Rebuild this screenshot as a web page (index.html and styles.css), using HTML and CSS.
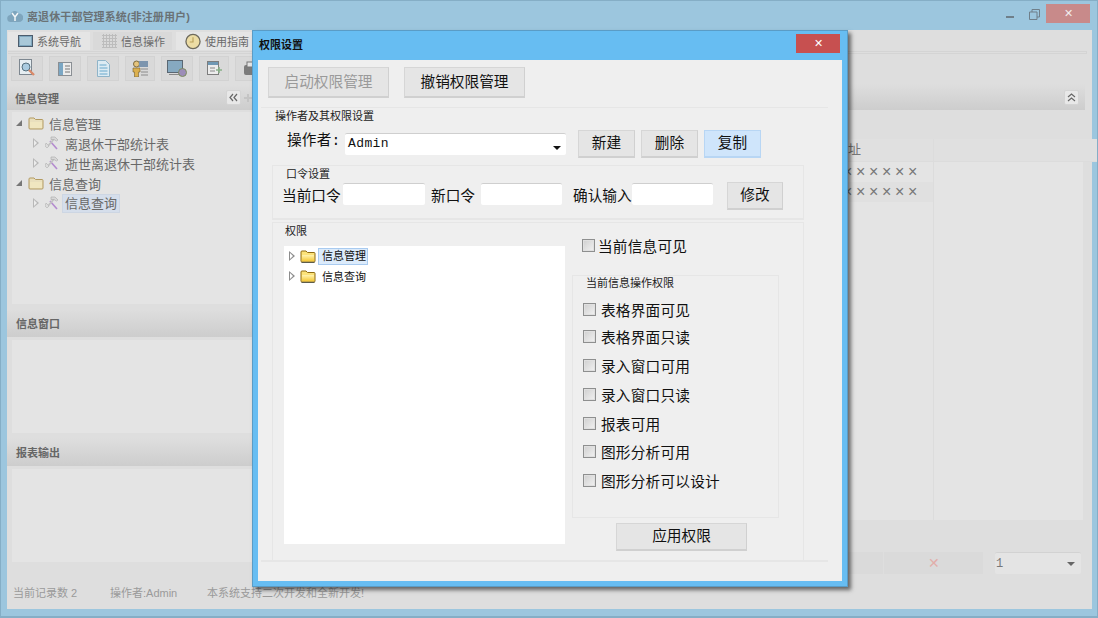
FILE: index.html
```html
<!DOCTYPE html>
<html lang="zh">
<head>
<meta charset="utf-8">
<title>离退休干部管理系统</title>
<link rel="stylesheet" href="styles.css">
</head>
<body>
<svg class="defs" width="0" height="0" aria-hidden="true">
  <defs>
    <linearGradient id="fy" x1="0" y1="0" x2="0" y2="1"><stop offset="0" stop-color="#fff3b0"/><stop offset="1" stop-color="#f5c93a"/></linearGradient>
    <symbol id="folder-y" viewBox="0 0 16 13"><path d="M1 3V2q0-1 1-1h4l1.500 1.500H14q1 0 1 1V11q0 1-1 1H2q-1 0-1-1Z" fill="#fbe27a" stroke="#8f6b12"/><path d="M2 5h12v6H2Z" fill="url(#fy)"/><path d="M1.500 12.500h13" stroke="#5c5c4c"/></symbol>
    <symbol id="folder-d" viewBox="0 0 16 13"><path d="M1 3V2q0-1 1-1h4l1.500 1.500H14q1 0 1 1V11q0 1-1 1H2q-1 0-1-1Z" fill="#e9dfbd" stroke="#b39a60"/><path d="M2 5h12v6H2Z" fill="#f0e6c0"/></symbol>
    <symbol id="tool" viewBox="0 0 14 14"><path d="M5 5 12 13" stroke="#b48ccf" stroke-width="1.600"/><path d="M9 3 3 10" stroke="#c2c2c2" stroke-width="1.800"/><path d="M6 1h4l3 3-1.500 1L9 3.500H6Z" fill="#d8d8d8" stroke="#a8a8a8" stroke-width=".6"/><path d="M1 7l3 3-2 2-2-2Z" fill="#dcdcdc" stroke="#b0b0b0" stroke-width=".6"/></symbol>
  </defs>
</svg>
<div class="desktop">
  <header class="titlebar">
    <svg class="logo" width="16" height="14" viewBox="0 0 16 14"><path d="M4 13a3.500 3.500 0 0 1-.5-7A4.500 4.500 0 0 1 12 4.500 4 4 0 0 1 12 13Z" fill="#7ea5bd"/><path d="M5 4l3 4 3-4M8 8v4" stroke="#f2f6f8" stroke-width="1.500" fill="none"/></svg>
    <span class="app-title">离退休干部管理系统(非注册用户)</span>
    <div class="win-ctrls">
      <span class="win-min"></span>
      <svg class="win-restore" width="11" height="11" viewBox="0 0 11 11"><path d="M.5 3h7.500v7.500H.5Z M3 3V.5h7.500V8H8" fill="none" stroke="#6f7f8a"/></svg>
      <button class="win-close">✕</button>
    </div>
  </header>

  <div class="client">
    <nav class="tabs">
      <div class="tab">
        <svg width="15" height="12" viewBox="0 0 15 12"><rect x=".5" y=".5" width="14" height="11" fill="#7fa6bd" stroke="#4c5c6c"/><rect x="2" y="2" width="11" height="8" fill="#a9c8d8"/></svg>
        <span>系统导航</span>
      </div>
      <div class="tab tab-on">
        <svg width="15" height="14" viewBox="0 0 15 14"><path d="M0 1.500h15M0 4.500h15M0 7.500h15M0 10.500h15M0 13.500h15M1.500 0v14M4.500 0v14M7.500 0v14M10.500 0v14M13.500 0v14" stroke="#bcbcbc"/></svg>
        <span>信息操作</span>
      </div>
      <div class="tab">
        <svg width="16" height="17" viewBox="0 0 17 17"><circle cx="8.500" cy="8.500" r="7.500" fill="#ecdca4" stroke="#6e6a5c" stroke-width="1.400"/><path d="M8.500 4v5H5" stroke="#b9a05a" stroke-width="1.200" fill="none"/></svg>
        <span>使用指南</span>
      </div>
    </nav>
    <div class="tab-rule"></div>

    <div class="toolbar">
      <button class="tool">
        <svg width="18" height="20" viewBox="0 0 18 20"><rect x="1.500" y=".5" width="12" height="15" fill="#e6eef2" stroke="#7d8790"/><circle cx="8" cy="8" r="4" fill="#a9cbe0" stroke="#55707f"/><path d="M11 11l5 5" stroke="#d98a6a" stroke-width="2.400"/></svg>
      </button>
      <button class="tool">
        <svg width="14" height="14" viewBox="0 0 14 14"><rect x=".5" y=".5" width="13" height="13" fill="#ececec" stroke="#8a8f94"/><rect x="1" y="1" width="4" height="12" fill="#7ba7c4"/><path d="M7 4h5M7 7h5M7 10h5" stroke="#777"/></svg>
      </button>
      <button class="tool">
        <svg width="13" height="17" viewBox="0 0 13 17"><path d="M.5.5h8l4 4v12H.5Z" fill="#dcebf3" stroke="#8fb4c9"/><path d="M2.500 5h7M2.500 8h8M2.500 11h8M2.500 14h8" stroke="#68a8cc"/></svg>
      </button>
      <button class="tool tool-n">
        <svg width="16" height="17" viewBox="0 0 16 17"><circle cx="4.500" cy="4" r="3" fill="#e5c47c" stroke="#7c6a40"/><path d="M1 8h7v4H6.500v5h-4v-5H1Z" fill="#dcb04e" stroke="#73602e" stroke-width=".6"/><rect x="7" y="1" width="9" height="6" fill="#7d95ae"/><path d="M9 9h7M9 12h7M9 15h7" stroke="#8c8c8c"/></svg>
      </button>
      <button class="tool">
        <svg width="20" height="17" viewBox="0 0 20 17"><rect x=".5" y=".5" width="15" height="12" fill="#86a9c0" stroke="#5a6772"/><path d="M2 14.500h14" stroke="#888"/><circle cx="15.500" cy="12.500" r="4" fill="#9c8db8" stroke="#7c8c5c"/></svg>
      </button>
      <button class="tool tool-n">
        <svg width="15" height="15" viewBox="0 0 15 15"><rect x=".5" y=".5" width="11" height="13" fill="#ececec" stroke="#7d7d7d"/><rect x="1" y="1" width="10" height="3" fill="#6f98b4"/><path d="M3 7h5M3 10h5" stroke="#888"/><path d="M12 6v6M9 9h6" stroke="#88b088" stroke-width="1.600"/></svg>
      </button>
      <button class="tool">
        <svg width="16" height="16" viewBox="0 0 16 16"><rect x="1" y="4" width="14" height="10" rx="2" fill="#7c7c7c"/><rect x="4" y="1" width="8" height="5" fill="#e6e6e6" stroke="#777"/></svg>
      </button>
    </div>

    <div class="workspace">
      <aside class="side">
        <div class="panel-head panel-head-first">
          <span>信息管理</span>
          <button class="mini-btn mini-left" aria-label="折叠">
            <svg width="9" height="9" viewBox="0 0 9 9"><path d="M4 1 1 4.500 4 8M8 1 5 4.500 8 8" fill="none" stroke="#666" stroke-width="1.200"/></svg>
          </button>
          <span class="plus"></span>
        </div>
        <div class="side-tree">
          <div class="t-row">
            <i class="tri-open"></i>
            <svg class="t-folder" width="16" height="13"><use href="#folder-d"/></svg>
            <span>信息管理</span>
          </div>
          <div class="t-row t-sub">
            <i class="tri-closed"></i>
            <svg class="t-tool" width="14" height="14"><use href="#tool"/></svg>
            <span>离退休干部统计表</span>
          </div>
          <div class="t-row t-sub">
            <i class="tri-closed"></i>
            <svg class="t-tool" width="14" height="14"><use href="#tool"/></svg>
            <span>逝世离退休干部统计表</span>
          </div>
          <div class="t-row">
            <i class="tri-open"></i>
            <svg class="t-folder" width="16" height="13"><use href="#folder-d"/></svg>
            <span>信息查询</span>
          </div>
          <div class="t-row t-sub">
            <i class="tri-closed"></i>
            <svg class="t-tool" width="14" height="14"><use href="#tool"/></svg>
            <span class="t-sel">信息查询</span>
          </div>
        </div>
        <div class="panel-head"><span>信息窗口</span></div>
        <div class="side-box"></div>
        <div class="panel-head panel-head-3"><span>报表输出</span></div>
        <div class="side-box"></div>
      </aside>

      <main class="content">
        <div class="panel-head content-head">
          <button class="mini-btn mini-up" aria-label="折叠">
            <svg width="9" height="9" viewBox="0 0 9 9"><path d="M1 4 4.500 1 8 4M1 8 4.500 5 8 8" fill="none" stroke="#666" stroke-width="1.200"/></svg>
          </button>
        </div>
        <div class="grid-box">
          <div class="grid-col">
            <div class="g-head"><span class="g-head-text">地址</span></div>
            <div class="g-row">××××××××</div>
            <div class="g-row g-alt">××××××××</div>
          </div>
          <div class="grid-col grid-col-r">
            <div class="g-head"></div>
          </div>
        </div>
        <div class="pager">
          <div class="pager-cells">
            <div class="p-cell"></div>
            <div class="p-cell p-x">✕</div>
          </div>
          <div class="p-select"><span>1</span><i class="caret caret-dim"></i></div>
        </div>
      </main>
    </div>

    <footer class="status">
      <span class="s-1">当前记录数 2</span>
      <span class="s-2">操作者:Admin</span>
      <span>本系统支持二次开发和全新开发!</span>
    </footer>
  </div>

  <section class="dialog">
    <div class="dlg-title">
      <span class="dlg-name">权限设置</span>
      <button class="dlg-close">✕</button>
    </div>
    <div class="dlg-body">
      <div class="top-btns">
        <button class="btn btn-top btn-off">启动权限管理</button>
        <button class="btn btn-top">撤销权限管理</button>
      </div>
      <div class="grp-main">
        <div class="legend legend-main">操作者及其权限设置</div>
        <div class="op-row">
          <label class="op-label">操作者:</label>
          <div class="op-select"><span>Admin</span><i class="caret"></i></div>
          <div class="op-btns">
            <button class="btn btn-sm">新建</button>
            <button class="btn btn-sm">删除</button>
            <button class="btn btn-sm btn-hot">复制</button>
          </div>
        </div>
        <div class="grp-pw">
          <div class="legend legend-pw">口令设置</div>
          <div class="pw-row">
            <label class="pw-l1">当前口令</label><div class="inp inp-1"></div>
            <label class="pw-l2">新口令</label><div class="inp inp-2"></div>
            <label class="pw-l3">确认输入</label><div class="inp inp-2"></div>
            <button class="btn btn-sm btn-mod">修改</button>
          </div>
        </div>
        <div class="grp-perm">
          <div class="legend legend-perm">权限</div>
          <div class="perm-cols">
            <div class="perm-tree">
              <div class="pt-row">
                <i class="tri-closed tri-dark"></i>
                <svg class="pt-folder" width="16" height="13"><use href="#folder-y"/></svg>
                <span class="pt-sel">信息管理</span>
              </div>
              <div class="pt-row">
                <i class="tri-closed tri-dark"></i>
                <svg class="pt-folder" width="16" height="13"><use href="#folder-y"/></svg>
                <span class="pt-txt">信息查询</span>
              </div>
            </div>
            <div class="perm-right">
              <label class="chk chk-top"><i class="box"></i>当前信息可见</label>
              <div class="grp-ops">
                <div class="legend legend-ops">当前信息操作权限</div>
                <label class="chk chk-first"><i class="box"></i>表格界面可见</label>
                <label class="chk chk-t2"><i class="box"></i>表格界面只读</label>
                <label class="chk"><i class="box"></i>录入窗口可用</label>
                <label class="chk"><i class="box"></i>录入窗口只读</label>
                <label class="chk"><i class="box"></i>报表可用</label>
                <label class="chk chk-t1"><i class="box"></i>图形分析可用</label>
                <label class="chk"><i class="box"></i>图形分析可以设计</label>
              </div>
              <button class="btn btn-apply">应用权限</button>
            </div>
          </div>
        </div>
      </div>
    </div>
  </section>
</div>
</body>
</html>
```
FILE: styles.css
```css
* { box-sizing: border-box; }
html, body { margin: 0; padding: 0; }
body { font-family: "Liberation Sans", "Noto Sans CJK SC", sans-serif; }
.defs { position: absolute; }
button { font-family: inherit; margin: 0; padding: 0; cursor: default; }

.desktop {
  position: relative; width: 1098px; height: 618px; overflow: hidden;
  background: #9cc6de; border: 1px solid #85aec6; border-bottom-width: 2px;
  display: flex; flex-direction: column;
}

/* title bar */
.titlebar { height: 29px; flex: none; display: flex; align-items: center; padding-left: 6px; }
.logo { margin-right: 4px; }
.app-title { font-size: 11px; font-weight: 700; color: #6a7276; letter-spacing: .1px; }
.win-ctrls { margin-left: auto; display: flex; align-items: flex-start; height: 100%; padding-top: 3px; padding-right: 7px; }
.win-min { width: 8px; height: 2px; background: #6f7f8a; margin-top: 12px; margin-right: 15px; }
.win-restore { margin-top: 5px; margin-right: 6px; }
.win-close { width: 44px; height: 19px; background: #c88a8a; border: 0; color: #f2ecec; font-size: 11px; line-height: 19px; }

.client { flex: 1; margin: 0 5px 7px 6px; background: #dedede; display: flex; flex-direction: column; min-height: 0; position: relative; }

/* tabs */
.tabs { height: 21px; flex: none; display: flex; padding: 2px 0 0 1px; }
.tab { height: 18px; display: flex; align-items: center; gap: 4px; font-size: 11px; color: #6a6a6a; background: #e5e5e5; padding-left: 10px; }
.tab:nth-child(1) { width: 82px; }
.tab:nth-child(2) { width: 79px; margin-left: 3px; background: #d9d9d9; padding-left: 9px; }
.tab:nth-child(3) { width: 76px; margin-left: 4px; padding-left: 9px; }
.tab-rule { height: 3px; margin: 0 5px 0 1px; border: 1px solid #d4d4d4; border-left: 0; flex: none; }

/* toolbar */
.toolbar { height: 29px; flex: none; display: flex; gap: 6px; padding: 2px 0 0 4px; }
.tool { width: 32px; height: 25px; background: #d9d9d9; border: 1px solid #d2d2d2; display: flex; align-items: center; justify-content: center; flex: none; }
.tool-n { width: 30px; }

.workspace { flex: 1; display: flex; min-height: 0; }

/* panel header */
.panel-head { height: 28px; flex: none; display: flex; align-items: center; padding-left: 9px; background: linear-gradient(#dedede, #cdcdcd); font-size: 11px; font-weight: 700; color: #666; position: relative; }
.panel-head-first { height: 25px; margin-top: 2px; padding-left: 8px; }
.panel-head-3 { margin-top: 5px; }
.mini-btn { width: 15px; height: 15px; border: 1px solid #d4d4d4; border-radius: 2px; background: #e8e8e8; display: flex; align-items: center; justify-content: center; }
.mini-left { margin-left: 167px; }
.plus { width: 8px; height: 8px; margin-left: 3px; background: linear-gradient(#c4c4c4, #c4c4c4) center/8px 2px no-repeat, linear-gradient(#c4c4c4, #c4c4c4) center/2px 8px no-repeat; }
.mini-up { position: absolute; right: 6px; top: 6px; }

/* left */
.side { width: 245px; flex: none; display: flex; flex-direction: column; }
.side-tree { height: 192px; margin: 2px 0 5px 5px; background: #e4e4e4; padding-top: 1px; flex: none; }
.side-box { height: 93px; margin: 3px 0 0 5px; background: #e4e4e4; flex: none; }
.t-row { height: 20px; display: flex; align-items: center; font-size: 13px; color: #686868; padding-left: 4px; }
.t-sub { padding-left: 21px; }
.tri-open { width: 0; height: 0; border-left: 6px solid transparent; border-bottom: 6px solid #777; margin-right: 6px; flex: none; }
.tri-closed { position: relative; width: 6px; height: 10px; flex: none; margin-right: 6px; background: #b8b8b8; clip-path: polygon(0 0, 100% 50%, 0 100%); }
.tri-closed::after { content: ""; position: absolute; left: 1px; top: 2px; width: 3px; height: 6px; background: #ececec; clip-path: polygon(0 0, 100% 50%, 0 100%); }
.t-folder { margin-right: 5px; }
.t-tool { margin-right: 6px; }
.t-sel { background: #d5deeb; border: 1px solid #cdd6e3; padding: 0 2px; margin-left: -3px; line-height: 18px; height: 19px; }

/* right */
.content { flex: 1; min-width: 0; display: flex; flex-direction: column; }
.content-head { margin: 1px 7px 0 0; height: 26px; }
.grid-box { height: 381px; margin: 29px 9px 0 0; background: #e4e4e4; display: flex; flex: none; }
.grid-col { flex: 1; min-width: 0; }
.grid-col-r { flex: none; width: 150px; border-left: 1px solid #dcdcdc; }
.g-head { height: 23px; background: #e0e0e0; border-bottom: 1px solid #dcdcdc; font-size: 13px; color: #777; line-height: 22px; padding-left: 583px; }
.g-row { height: 20px; font-family: "Liberation Sans", sans-serif; font-size: 16px; letter-spacing: 3.66px; color: #777; padding-left: 565px; line-height: 19px; white-space: nowrap; overflow: hidden; }
.g-alt { background: #e0e0e0; }
.pager { display: flex; margin-top: 32px; }
.pager-cells { flex: 1; display: flex; justify-content: flex-end; }
.p-cell { width: 50px; height: 22px; background: #dadada; margin-right: 1px; }
.p-x { width: 99px; margin: 0; text-align: center; color: #e2aeaa; font-size: 14px; line-height: 22px; }
.p-select { width: 86px; height: 22px; margin: 0 11px 0 12px; background: #e4e4e4; border-top: 1px solid #d2d2d2; border-radius: 2px; display: flex; align-items: center; justify-content: space-between; padding: 0 6px 0 1px; font-family: "Liberation Mono", monospace; font-size: 12px; color: #777; }

.status { position: absolute; left: 6px; top: 555px; height: 16px; display: flex; font-size: 11px; color: #9a9a9a; line-height: 16px; white-space: nowrap; }
.s-1 { width: 97px; }
.s-2 { width: 97px; }

.caret { width: 0; height: 0; border-left: 4px solid transparent; border-right: 4px solid transparent; border-top: 4px solid #111; flex: none; }
.caret-dim { border-top-color: #666; }

/* dialog */
.dialog { position: absolute; left: 251px; top: 29px; width: 596px; height: 557px; background: #67bdf2; border: 1px solid #5a9cc6; box-shadow: 3px 3px 4px rgba(0,0,0,.55); display: flex; flex-direction: column; padding: 0 5px 5px; }
.dlg-title { height: 29px; flex: none; display: flex; align-items: center; justify-content: space-between; font-size: 11px; font-weight: 700; color: #111; margin: 0 2px 0 1px; }
.dlg-name { margin-top: -4px; }
.dlg-close { width: 44px; height: 19px; background: #c75050; border: 0; color: #fff; font-size: 11px; line-height: 19px; margin-top: -5px; }
.dlg-body { flex: 1; background: #efefef; }

.btn { background: #e5e5e5; border: 1px solid #d6d6d6; border-bottom: 2px solid #d0d0d0; border-right-color: #d0d0d0; font-size: 14.67px; color: #111; line-height: 1; }
.btn-top { width: 121px; height: 31px; }
.btn-off { color: #9a9a9a; }
.btn-sm { width: 57px; height: 28px; }
.btn-hot { background: #cfe5fb; border-color: #b8d6f4; }
.top-btns { display: flex; gap: 15px; padding: 7px 0 0 10px; }

.grp-main { width: 567px; margin: 9px 0 0 3px; height: 455px; border-top: 1px solid #e6e6e6; border-bottom: 2px solid #e6e6e6; padding-left: 11px; }
.legend { font-size: 11px; color: #222; line-height: 14px; }
.legend-main { margin: 1px 0 0 3px; }
.op-row { display: flex; align-items: flex-start; margin-top: 7px; }
.op-label { font-family: "Liberation Mono", "Noto Sans CJK SC", monospace; font-size: 14.67px; color: #111; line-height: 20px; margin: 1px 0 0 15px; width: 58px; letter-spacing: .2px; }
.op-select { width: 221px; height: 22px; background: #fff; border-top: 1px solid #cfcfcf; border-radius: 2px; margin-top: 3px; display: flex; align-items: flex-start; justify-content: space-between; padding: 1px 5px 0 3px; font-family: "Liberation Mono", monospace; font-size: 13px; line-height: 17px; letter-spacing: .4px; color: #111; }
.op-select .caret { border-top-color: #111; margin-top: 11px; }
.op-btns { display: flex; gap: 6px; margin-left: 12px; }

.grp-pw { width: 532px; height: 55px; margin-top: 7px; border: 1px solid #e6e6e6; border-bottom-width: 2px; }
.legend-pw { margin: 1px 0 0 13px; }
.pw-row { display: flex; align-items: center; font-size: 14.67px; color: #111; padding-left: 9px; margin-top: 1px; height: 27px; }
.pw-row label { margin-bottom: 2px; }
.pw-l1 { width: 61px; }
.pw-l2 { width: 50px; margin-left: 6px; }
.pw-l3 { width: 59px; margin-left: 11px; }
.inp { height: 22px; background: #fff; border-top: 1px solid #cfcfcf; border-radius: 2px; flex: none; margin-bottom: 4px; }
.inp-1 { width: 82px; }
.inp-2 { width: 81px; }
.btn-mod { width: 56px; margin-left: 14px; }

.grp-perm { width: 532px; height: 340px; margin-top: 2px; border: 1px solid #e6e6e6; border-bottom: 0; }
.legend-perm { margin: 1px 0 0 12px; }
.perm-cols { display: flex; padding-left: 11px; margin-top: 8px; }
.perm-tree { width: 281px; height: 298px; background: #fff; flex: none; }
.pt-row { height: 20px; display: flex; align-items: center; padding-left: 5px; font-size: 11px; color: #111; }
.tri-dark { margin-right: 5px; background: #8c8c8c; }
.tri-dark::after { background: #fff; }
.pt-folder { margin-right: 2px; }
.pt-sel { background: #dcebfb; border: 1px solid #a9cbf0; padding: 0 1px 0 3px; height: 17px; line-height: 15px; }
.pt-txt { padding: 0 3px 0 4px; }

.perm-right { width: 207px; margin-left: 7px; display: flex; flex-direction: column; }
.chk { display: flex; align-items: center; height: 29px; font-size: 14.67px; color: #111; padding-left: 10px; letter-spacing: .2px; }
.chk-top { height: 20px; margin-top: -11px; }
.chk-top .box { margin-right: 3px; }
.box { width: 13px; height: 13px; border: 1px solid #8e8f8f; outline: 1px solid #e0e0e0; outline-offset: -2px; background: linear-gradient(135deg, #cfcfcf, #f2f2f2); margin-right: 5px; flex: none; }
.grp-ops { height: 243px; margin-top: 20px; border: 1px solid #e6e6e6; }
.legend-ops { margin: 0 0 0 13px; }
.chk-first { margin-top: 5px; }
.chk-t2 { margin-top: -2px; }
.chk-t1 { margin-top: -1px; }
.btn-apply { width: 131px; height: 28px; margin: 5px 0 0 44px; flex: none; }
```
